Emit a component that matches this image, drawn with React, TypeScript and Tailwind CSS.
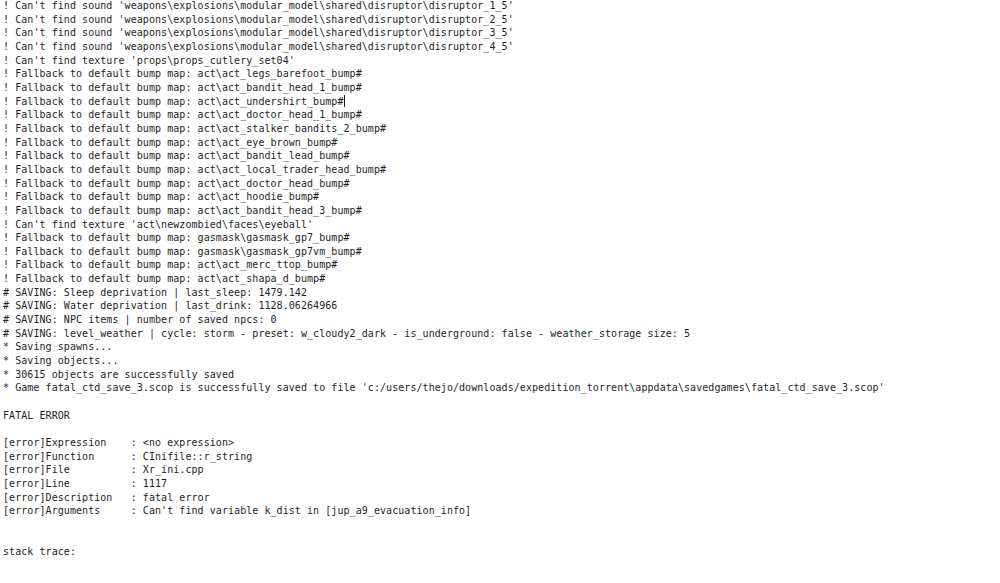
const lines = [
  "! Can't find sound 'weapons\\explosions\\modular_model\\shared\\disruptor\\disruptor_1_5'",
  "! Can't find sound 'weapons\\explosions\\modular_model\\shared\\disruptor\\disruptor_2_5'",
  "! Can't find sound 'weapons\\explosions\\modular_model\\shared\\disruptor\\disruptor_3_5'",
  "! Can't find sound 'weapons\\explosions\\modular_model\\shared\\disruptor\\disruptor_4_5'",
  "! Can't find texture 'props\\props_cutlery_set04'",
  "! Fallback to default bump map: act\\act_legs_barefoot_bump#",
  "! Fallback to default bump map: act\\act_bandit_head_1_bump#",
  "! Fallback to default bump map: act\\act_undershirt_bump#",
  "! Fallback to default bump map: act\\act_doctor_head_1_bump#",
  "! Fallback to default bump map: act\\act_stalker_bandits_2_bump#",
  "! Fallback to default bump map: act\\act_eye_brown_bump#",
  "! Fallback to default bump map: act\\act_bandit_lead_bump#",
  "! Fallback to default bump map: act\\act_local_trader_head_bump#",
  "! Fallback to default bump map: act\\act_doctor_head_bump#",
  "! Fallback to default bump map: act\\act_hoodie_bump#",
  "! Fallback to default bump map: act\\act_bandit_head_3_bump#",
  "! Can't find texture 'act\\newzombied\\faces\\eyeball'",
  "! Fallback to default bump map: gasmask\\gasmask_gp7_bump#",
  "! Fallback to default bump map: gasmask\\gasmask_gp7vm_bump#",
  "! Fallback to default bump map: act\\act_merc_ttop_bump#",
  "! Fallback to default bump map: act\\act_shapa_d_bump#",
  "# SAVING: Sleep deprivation | last_sleep: 1479.142",
  "# SAVING: Water deprivation | last_drink: 1128.06264966",
  "# SAVING: NPC items | number of saved npcs: 0",
  "# SAVING: level_weather | cycle: storm - preset: w_cloudy2_dark - is_underground: false - weather_storage size: 5",
  "* Saving spawns...",
  "* Saving objects...",
  "* 30615 objects are successfully saved",
  "* Game fatal_ctd_save_3.scop is successfully saved to file 'c:/users/thejo/downloads/expedition_torrent\\appdata\\savedgames\\fatal_ctd_save_3.scop'",
  "",
  "FATAL ERROR",
  "",
  "[error]Expression    : <no expression>",
  "[error]Function      : CInifile::r_string",
  "[error]File          : Xr_ini.cpp",
  "[error]Line          : 1117",
  "[error]Description   : fatal error",
  "[error]Arguments     : Can't find variable k_dist in [jup_a9_evacuation_info]",
  "",
  "",
  "stack trace:",
]

export default function App() {
  return (
    <div className="w-[1000px] h-[583px] overflow-hidden bg-white">
      <div className="mt-[-1px] pl-[3px] font-['DejaVu_Sans_Mono',monospace] text-[10px] leading-[13.66px] tracking-[0.06px] text-[#1e1e1e] whitespace-pre">
        {lines.map((line, i) => (
          <div key={i} className="h-[13.66px]">
            {line}
            {i === 7 && <span className="inline-block w-px h-[12px] align-[-2px] bg-[#1e1e1e]" />}
          </div>
        ))}
      </div>
    </div>
  )
}
